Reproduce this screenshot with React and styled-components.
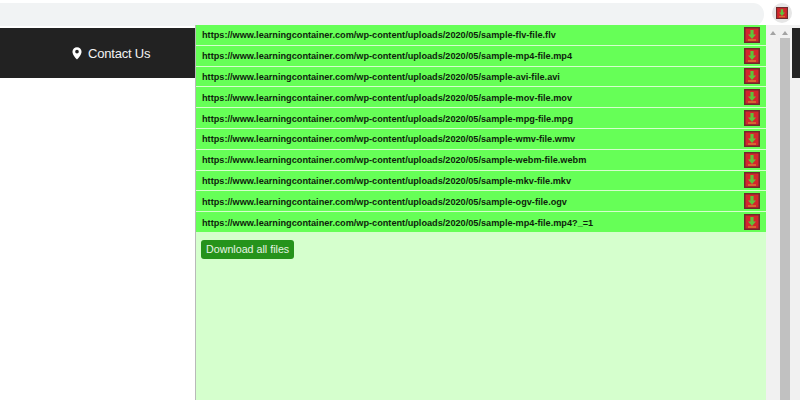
import React from 'react'
import styled, { createGlobalStyle } from 'styled-components'

const links = [
  'sample-flv-file.flv',
  'sample-mp4-file.mp4',
  'sample-avi-file.avi',
  'sample-mov-file.mov',
  'sample-mpg-file.mpg',
  'sample-wmv-file.wmv',
  'sample-webm-file.webm',
  'sample-mkv-file.mkv',
  'sample-ogv-file.ogv',
  'sample-mp4-file.mp4?_=1',
]
const base = 'https://www.learningcontainer.com/wp-content/uploads/2020/05/'

const Global = createGlobalStyle`
  html, body { margin: 0; padding: 0; background: #fff; }
  body { font-family: "Liberation Sans", Arial, sans-serif; }
`

const Page = styled.div`
  width: 800px;
  height: 400px;
  overflow: hidden;
  position: relative;
  background: #fff;
`

const Toolbar = styled.div`
  height: 28px;
  display: flex;
  align-items: flex-start;
  padding: 3px 8px 0 0;
  box-sizing: border-box;
  justify-content: space-between;
`

const Omnibox = styled.div`
  width: 764px;
  height: 23px;
  background: #f1f3f4;
  border-radius: 0 11px 11px 0;
`

const ExtensionBtn = styled.div`
  width: 20px;
  height: 20px;
  border-radius: 50%;
  background: #e6e6e6;
  display: flex;
  align-items: center;
  justify-content: center;
`

const NavBar = styled.div`
  height: 50px;
  background: #222;
  display: flex;
  align-items: center;
  padding-left: 72px;
  gap: 6px;
  color: #f2f2f2;
  font-size: 13px;
  letter-spacing: -0.2px;
`

const Popup = styled.div`
  position: absolute;
  left: 195px;
  top: 25px;
  width: 585px;
  height: 375px;
  display: flex;
  background: #d5ffcd;
  border-left: 1px solid #b9b9b9;
  box-sizing: border-box;
`

const Content = styled.div`
  flex: 1;
  min-width: 0;
`

const Row = styled.div`
  height: 19.8px;
  margin-bottom: 1px;
  background: #66ff57;
  display: flex;
  align-items: center;
  justify-content: space-between;
  padding: 0 6px;
  font-size: 9.17px;
  font-weight: 700;
  color: #0e1f0c;
  white-space: nowrap;
`

const RowLabel = styled.span`
  padding-top: 1px;
`

const AllButton = styled.button`
  margin: 7px 0 0 5px;
  height: 19px;
  padding: 0 5px;
  border: 0;
  border-radius: 3px;
  background: #25931b;
  color: #e6f3e4;
  font: 400 10.7px "Liberation Sans", Arial, sans-serif;
`

const Track = styled.div`
  width: ${p => p.$width}px;
  background: #f1f1f1;
  display: flex;
  flex-direction: column;
  align-items: center;
`

const Arrow = styled.div`
  margin-top: 6px;
  border-left: 3px solid transparent;
  border-right: 3px solid transparent;
  border-bottom: 4px solid #a3a3a3;
`

const Thumb = styled.div`
  width: 100%;
  flex: 1;
  margin-top: 3px;
  background: #c1c1c1;
`

const PageScroll = styled.div`
  position: absolute;
  left: 780px;
  top: 25px;
  width: 20px;
  height: 375px;
  display: flex;
  background: #f1f1f1;
`

const SideBar = styled.div`
  flex: 1;
  margin-left: 2px;
  &::before {
    content: '';
    display: block;
    height: 50px;
    margin-top: 3px;
    background: #222;
  }
`

const DownloadIcon = ({ size = 16 }) => (
  <svg width={size} height={size} viewBox="0 0 16 16">
    <rect width="16" height="16" fill="#6e2b2b" />
    <rect x="1.500" y="1.500" width="13" height="13" fill="#d3262c" />
    <path d="M6.400 3h3.200v4.400H12L8 12 4 7.400h2.400z" fill="#5fc23a" />
    <rect x="4" y="12.400" width="8" height="1.200" fill="#d98f34" />
  </svg>
)

export default function App() {
  return (
    <Page>
      <Global />
      <Toolbar>
        <Omnibox />
        <ExtensionBtn>
          <DownloadIcon size={12} />
        </ExtensionBtn>
      </Toolbar>
      <NavBar>
        <svg width="10" height="13" viewBox="0 0 11 14">
          <path
            fillRule="evenodd"
            d="M5.500 0a5 5 0 0 1 5 5c0 3-3 6.500-5 8.500C3.500 11.500.5 8 .5 5a5 5 0 0 1 5-5zm0 3a2 2 0 1 0 0 4 2 2 0 0 0 0-4z"
            fill="#fff"
          />
        </svg>
        Contact Us
      </NavBar>
      <PageScroll>
        <Track $width={10}>
          <Arrow />
          <Thumb />
        </Track>
        <SideBar />
      </PageScroll>
      <Popup>
        <Content>
          {links.map(l => (
            <Row key={l}>
              <RowLabel>{base + l}</RowLabel>
              <DownloadIcon />
            </Row>
          ))}
          <AllButton>Download all files</AllButton>
        </Content>
        <Track $width={14}>
          <Arrow />
        </Track>
      </Popup>
    </Page>
  )
}
